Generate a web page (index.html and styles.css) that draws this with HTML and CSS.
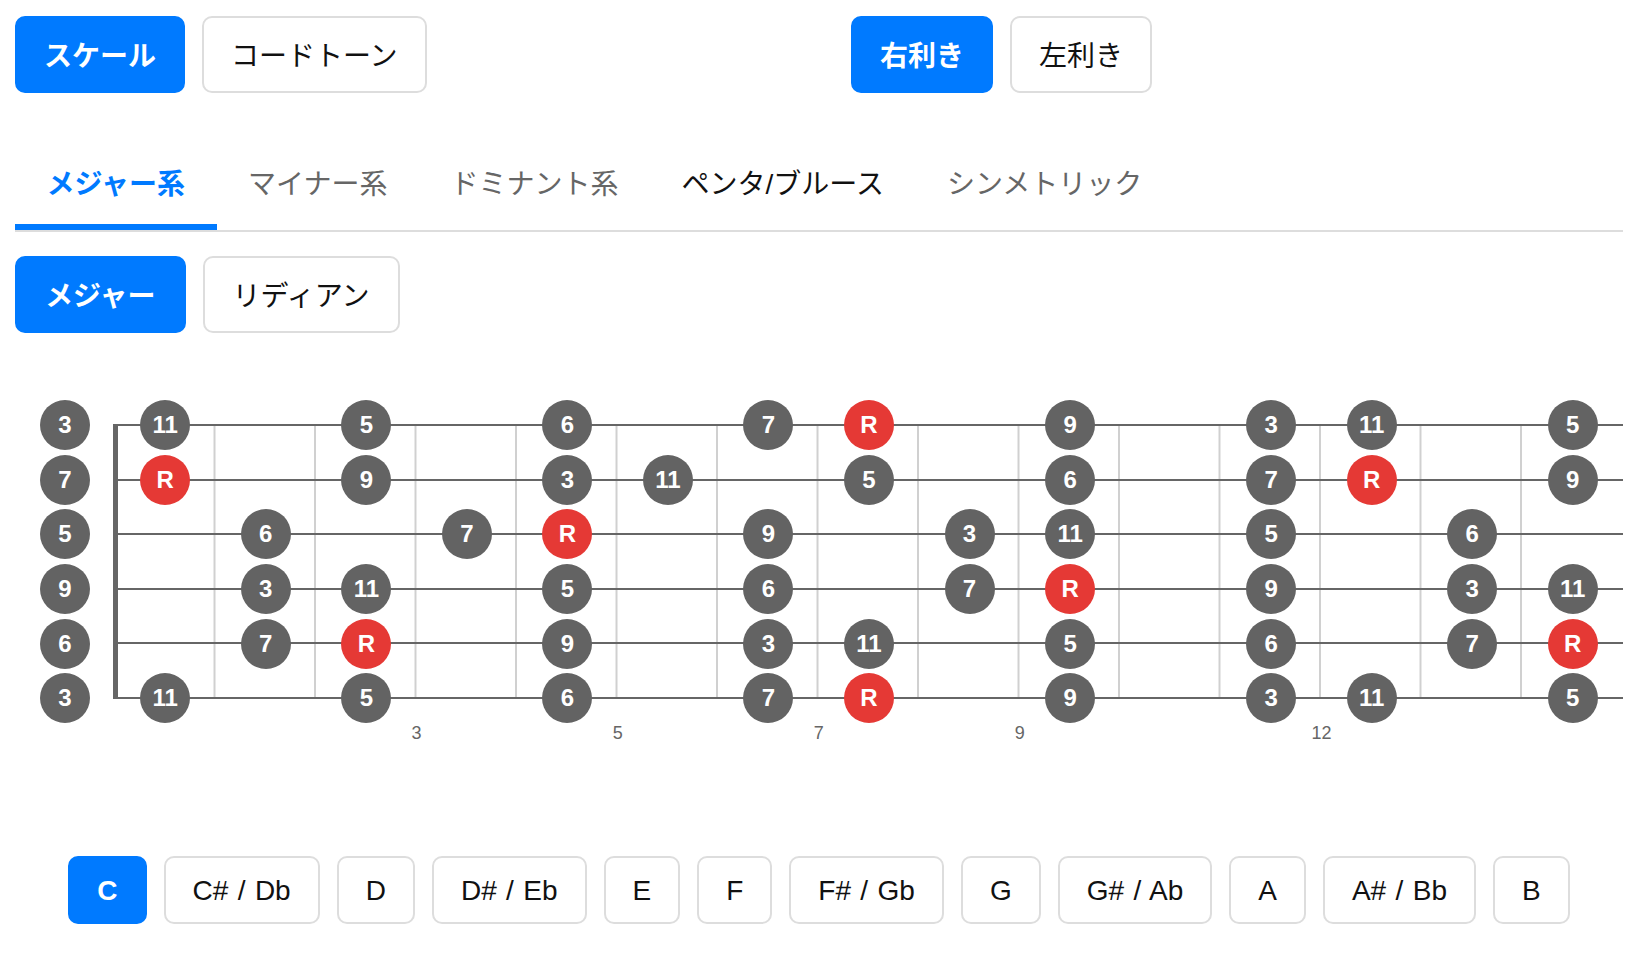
FILE: index.html
```html
<!DOCTYPE html>
<html lang="ja">
<head>
<meta charset="utf-8">
<title>Fretboard</title>
<link rel="stylesheet" href="styles.css">
</head>
<body>
<div class="app">
  <div class="toprow">
    <div class="group">
      <button class="btn active">スケール</button>
      <button class="btn">コードトーン</button>
    </div>
    <div class="group">
      <button class="btn active">右利き</button>
      <button class="btn">左利き</button>
    </div>
  </div>

  <div class="tabs">
    <div class="tab active">メジャー系</div>
    <div class="tab">マイナー系</div>
    <div class="tab">ドミナント系</div>
    <div class="tab hover">ペンタ/ブルース</div>
    <div class="tab">シンメトリック</div>
  </div>

  <div class="subrow">
    <button class="btn active">メジャー</button>
    <button class="btn">リディアン</button>
  </div>

  <div class="board">
    <div class="frets"></div>
    <div class="strings"></div>

    <div class="note s1 f0">3</div>
    <div class="note s1 f1">11</div>
    <div class="note s1 f3">5</div>
    <div class="note s1 f5">6</div>
    <div class="note s1 f7">7</div>
    <div class="note root s1 f8">R</div>
    <div class="note s1 f10">9</div>
    <div class="note s1 f12">3</div>
    <div class="note s1 f13">11</div>
    <div class="note s1 f15">5</div>

    <div class="note s2 f0">7</div>
    <div class="note root s2 f1">R</div>
    <div class="note s2 f3">9</div>
    <div class="note s2 f5">3</div>
    <div class="note s2 f6">11</div>
    <div class="note s2 f8">5</div>
    <div class="note s2 f10">6</div>
    <div class="note s2 f12">7</div>
    <div class="note root s2 f13">R</div>
    <div class="note s2 f15">9</div>

    <div class="note s3 f0">5</div>
    <div class="note s3 f2">6</div>
    <div class="note s3 f4">7</div>
    <div class="note root s3 f5">R</div>
    <div class="note s3 f7">9</div>
    <div class="note s3 f9">3</div>
    <div class="note s3 f10">11</div>
    <div class="note s3 f12">5</div>
    <div class="note s3 f14">6</div>

    <div class="note s4 f0">9</div>
    <div class="note s4 f2">3</div>
    <div class="note s4 f3">11</div>
    <div class="note s4 f5">5</div>
    <div class="note s4 f7">6</div>
    <div class="note s4 f9">7</div>
    <div class="note root s4 f10">R</div>
    <div class="note s4 f12">9</div>
    <div class="note s4 f14">3</div>
    <div class="note s4 f15">11</div>

    <div class="note s5 f0">6</div>
    <div class="note s5 f2">7</div>
    <div class="note root s5 f3">R</div>
    <div class="note s5 f5">9</div>
    <div class="note s5 f7">3</div>
    <div class="note s5 f8">11</div>
    <div class="note s5 f10">5</div>
    <div class="note s5 f12">6</div>
    <div class="note s5 f14">7</div>
    <div class="note root s5 f15">R</div>

    <div class="note s6 f0">3</div>
    <div class="note s6 f1">11</div>
    <div class="note s6 f3">5</div>
    <div class="note s6 f5">6</div>
    <div class="note s6 f7">7</div>
    <div class="note root s6 f8">R</div>
    <div class="note s6 f10">9</div>
    <div class="note s6 f12">3</div>
    <div class="note s6 f13">11</div>
    <div class="note s6 f15">5</div>

    <div class="fretnum m3">3</div>
    <div class="fretnum m5">5</div>
    <div class="fretnum m7">7</div>
    <div class="fretnum m9">9</div>
    <div class="fretnum m12">12</div>
  </div>

  <div class="keys">
    <button class="key active">C</button>
    <button class="key">C# / Db</button>
    <button class="key">D</button>
    <button class="key">D# / Eb</button>
    <button class="key">E</button>
    <button class="key">F</button>
    <button class="key">F# / Gb</button>
    <button class="key">G</button>
    <button class="key">G# / Ab</button>
    <button class="key">A</button>
    <button class="key">A# / Bb</button>
    <button class="key">B</button>
  </div>
</div>
</body>
</html>
```

FILE: styles.css
```css
* { box-sizing: border-box; }

html, body {
  margin: 0;
  padding: 0;
  background: #fff;
}

body {
  font-family: "Liberation Sans", "Noto Sans CJK JP", sans-serif;
  color: #111;
}

.app {
  padding: 16px 17px 0 15px;
}

/* ---------- buttons ---------- */
.btn {
  font-family: inherit;
  font-size: 28px;
  line-height: 37px;
  padding: 20px 27px 16px;
  border: 2px solid #ddd;
  border-radius: 10px;
  background: #fff;
  color: #111;
  cursor: pointer;
}

.btn.active {
  background: #007aff;
  border-color: #007aff;
  color: #fff;
  font-weight: bold;
}

.toprow {
  display: grid;
  grid-template-columns: 1fr 1fr;
  column-gap: 64px;
}

.group,
.subrow {
  display: flex;
  gap: 17px;
}

/* ---------- tabs ---------- */
.tabs {
  display: flex;
  margin-top: 51px;
  border-bottom: 2px solid #ddd;
}

.tab {
  font-size: 28px;
  line-height: 38px;
  padding: 22px 31.5px 20px;
  border-bottom: 6px solid transparent;
  color: #666;
}

.tab.active {
  color: #007aff;
  font-weight: bold;
  border-bottom-color: #007aff;
}

.tab.hover {
  color: #111;
}

.subrow {
  margin-top: 24px;
}

.subrow .btn {
  padding-left: 28px;
  padding-right: 28px;
}

/* ---------- fretboard ---------- */
.board {
  margin-top: 65px;
  display: grid;
  grid-template-columns: 100px repeat(15, 1fr);
  grid-template-rows: repeat(6, 54.6px) 20px;
}

.frets {
  grid-column: 2 / 16;
  grid-row: 1 / 7;
  margin: 27.3px 0;
  background-image: linear-gradient(to right,
      transparent calc(100% - 2px),
      #d0d0d0 calc(100% - 2px));
  background-size: calc(100% / 14) 100%;
  background-repeat: repeat-x;
}

.strings {
  grid-column: 2 / -1;
  grid-row: 1 / 7;
  margin: 26.3px 0 26.3px -2px;
  border-left: 5px solid #666;
  background-image: repeating-linear-gradient(to bottom,
      #666 0, #666 2px,
      transparent 2px, transparent 54.6px);
}

.note {
  width: 50px;
  height: 50px;
  border-radius: 50%;
  background: #636363;
  color: #fff;
  font-weight: bold;
  font-size: 24px;
  line-height: 1;
  display: flex;
  align-items: center;
  justify-content: center;
  justify-self: center;
  align-self: center;
}

.note.root {
  background: #e53935;
}

.s1 { grid-row: 1; }
.s2 { grid-row: 2; }
.s3 { grid-row: 3; }
.s4 { grid-row: 4; }
.s5 { grid-row: 5; }
.s6 { grid-row: 6; }

.f0 { grid-column: 1; }
.f1 { grid-column: 2; }
.f2 { grid-column: 3; }
.f3 { grid-column: 4; }
.f4 { grid-column: 5; }
.f5 { grid-column: 6; }
.f6 { grid-column: 7; }
.f7 { grid-column: 8; }
.f8 { grid-column: 9; }
.f9 { grid-column: 10; }
.f10 { grid-column: 11; }
.f11 { grid-column: 12; }
.f12 { grid-column: 13; }
.f13 { grid-column: 14; }
.f14 { grid-column: 15; }
.f15 { grid-column: 16; }

.fretnum {
  grid-row: 7;
  margin-top: -3px;
  text-align: center;
  font-size: 18px;
  line-height: 20px;
  color: #666;
}

.m3 { grid-column: 4 / 6; }
.m5 { grid-column: 6 / 8; }
.m7 { grid-column: 8 / 10; }
.m9 { grid-column: 10 / 12; }
.m12 { grid-column: 13 / 15; }

/* ---------- keys ---------- */
.keys {
  margin-top: 110px;
  display: flex;
  justify-content: center;
  gap: 17px;
}

.key {
  font-family: inherit;
  font-size: 28px;
  line-height: 32px;
  padding: 17px 27px 15px;
  word-spacing: 1.6px;
  border: 2px solid #ddd;
  border-radius: 10px;
  background: #fff;
  color: #111;
  cursor: pointer;
}

.key.active {
  background: #007aff;
  border-color: #007aff;
  color: #fff;
  font-weight: bold;
}
```
